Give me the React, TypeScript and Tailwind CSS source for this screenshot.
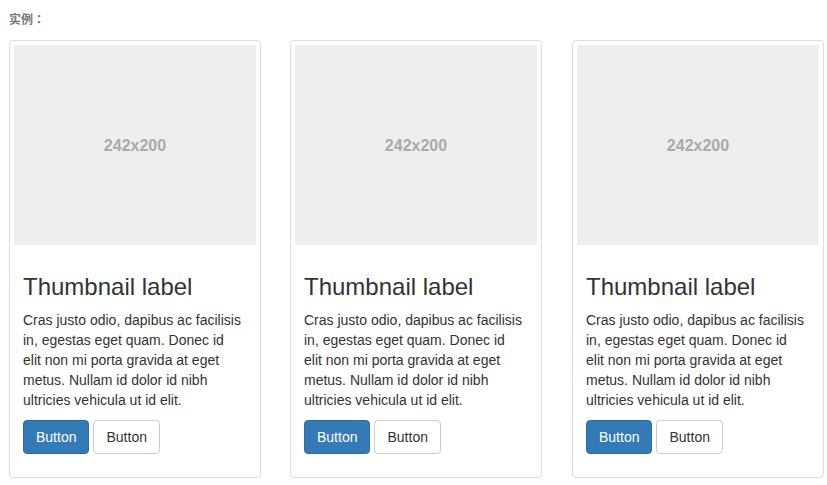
const Thumbnail = () => {
  return (
    <div className="w-[252px] shrink-0 rounded-[4px] border border-[#ddd] bg-white p-[4px]">
      <div className="flex h-[200px] w-[242px] items-center justify-center bg-[#eee] pt-[2px] text-[16px] font-bold text-[#aaa]">
        242x200
      </div>
      <div className="py-[9px] pr-[13px] pl-[9px] text-[#333]">
        <h3 className="mt-[20px] mb-[10px] text-[24px] leading-[1.1]">Thumbnail label</h3>
        <p className="mb-[10px] text-[14px] leading-[20px]">
          Cras justo odio, dapibus ac facilisis in, egestas eget quam. Donec id elit non mi porta gravida at eget
          metus. Nullam id dolor id nibh ultricies vehicula ut id elit.
        </p>
        <p className="mb-[10px] flex gap-[4px]">
          <a className="rounded-[4px] border border-[#2e6da4] bg-[#337ab7] px-[12px] py-[6px] text-[14px] leading-[20px] text-white">
            Button
          </a>
          <a className="rounded-[4px] border border-[#ccc] bg-white px-[12px] py-[6px] text-[14px] leading-[20px] text-[#333]">
            Button
          </a>
        </p>
      </div>
    </div>
  );
};

export default function App() {
  return (
    <div className="min-h-screen bg-white font-['Liberation_Sans',Arial,sans-serif]">
      <div className="pl-[9px] pt-[11px]">
        <div className="h-[29px] font-['Noto_Sans_CJK_JP','Noto_Sans_CJK_SC',sans-serif] text-[12px] leading-[16px] font-bold text-[#777]">
          实例：
        </div>
        <div className="flex">
          <Thumbnail />
          <div className="ml-[29px]">
            <Thumbnail />
          </div>
          <div className="ml-[30px]">
            <Thumbnail />
          </div>
        </div>
      </div>
    </div>
  );
}
